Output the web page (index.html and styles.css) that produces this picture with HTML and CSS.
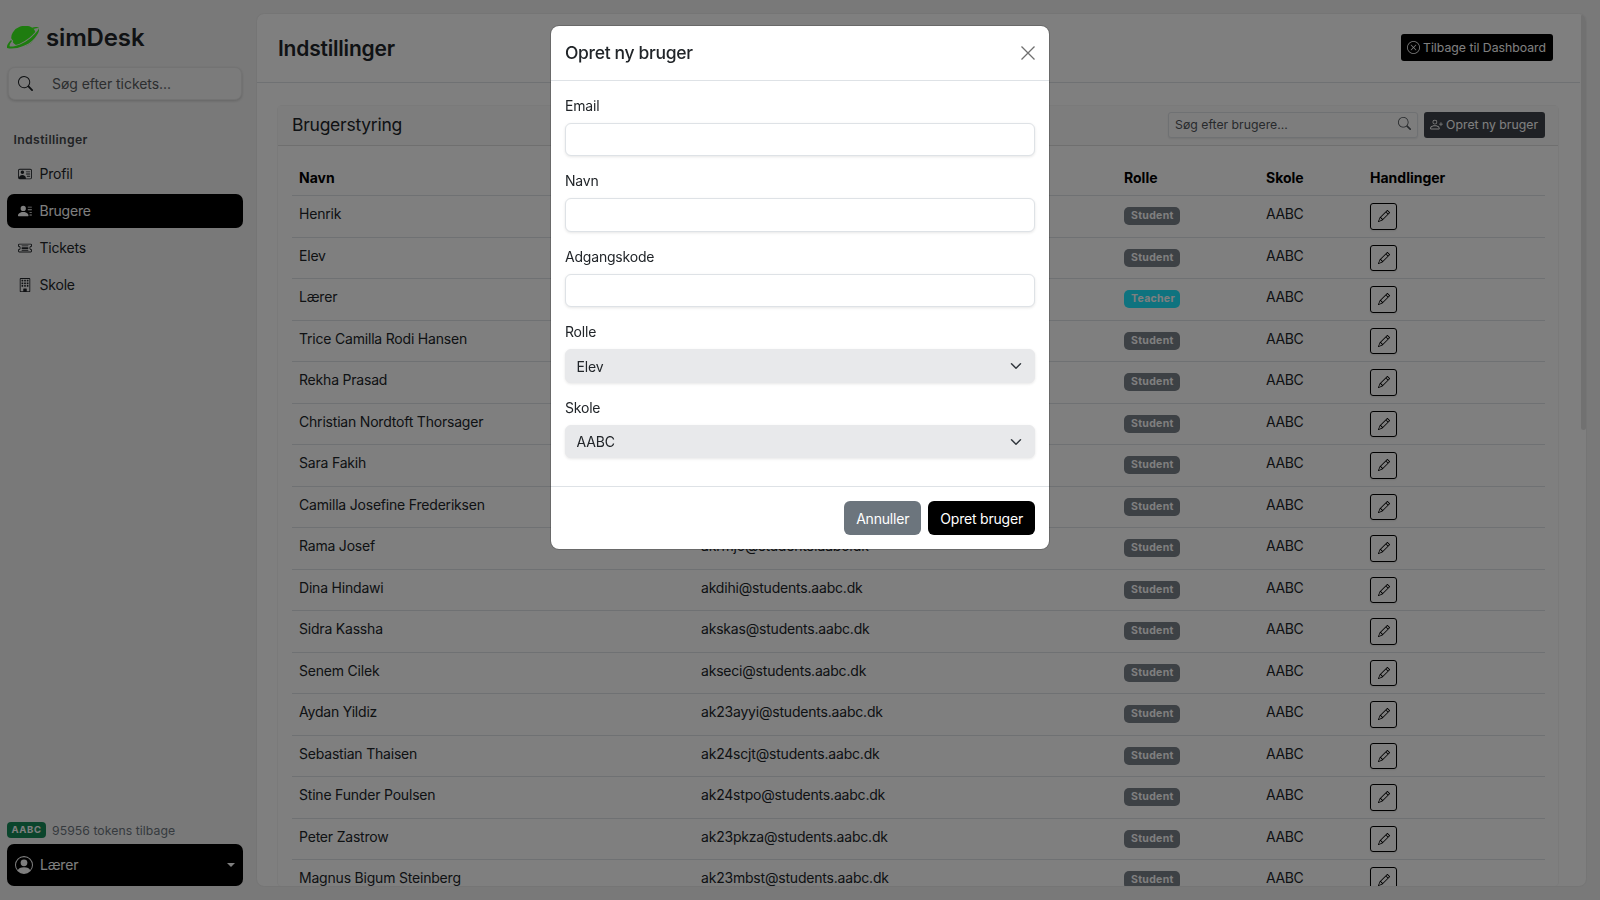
FILE: index.html
```html
<!DOCTYPE html>
<html lang="da">
<head>
<meta charset="utf-8">
<title>simDesk – Indstillinger</title>
<link rel="stylesheet" href="styles.css">
</head>
<body>
<div class="app">
  <aside class="sidebar">
    <div class="brand">
      <svg class="logo" viewBox="0 0 32 23" aria-hidden="true">
        <ellipse class="logo-fill" cx="16.500" cy="10" rx="12.500" ry="10" transform="rotate(-20 16.500 10)"/>
        <path class="logo-gap" d="M0 22C8 24 20 20 26 14 30 10 33 5 32 2 31 5 27 9 23 12.500 16 18 8 21 3 20.500 2 20.500 2.500 18 5 15L4 14C1 17-1 21 0 22Z"/>
        <path class="logo-fill" d="M0 22C8 24 20 20 26 14 30 10 33 5 32 2 31 5 27 9 23 12.500 16 18 8 21 3 20.500 2 20.500 2.500 18 5 15L4 14C1 17-1 21 0 22Z"/>
        <path class="logo-fill" d="M25 1.700C27.500.9 30.500.8 32 2 30.500 2 28.500 2.300 26.600 3.100Z"/>
      </svg>
      <span class="brand-name">simDesk</span>
    </div>
    <div class="side-search">
      <svg class="bi side-search-icon" viewBox="0 0 16 16"><path d="M11.742 10.344a6.500 6.500 0 1 0-1.397 1.398h-.001c.03.04.062.078.098.115l3.850 3.850a1 1 0 0 0 1.415-1.414l-3.850-3.850a1.007 1.007 0 0 0-.115-.1zM12 6.500a5.500 5.500 0 1 1-11 0 5.500 5.500 0 0 1 11 0z"/></svg>
      <input class="side-search-input" type="text" placeholder="Søg efter tickets...">
    </div>
    <div class="side-heading">Indstillinger</div>
    <nav class="side-nav">
      <a class="side-link">
        <svg class="bi" viewBox="0 0 16 16"><path d="M5 8a2 2 0 1 0 0-4 2 2 0 0 0 0 4Zm4-2.500a.5.5 0 0 1 .5-.5h4a.5.5 0 0 1 0 1h-4a.5.5 0 0 1-.5-.5ZM9 8a.5.5 0 0 1 .5-.5h4a.5.5 0 0 1 0 1h-4A.5.5 0 0 1 9 8Zm1 2.500a.5.5 0 0 1 .5-.5h3a.5.5 0 0 1 0 1h-3a.5.5 0 0 1-.5-.5Z"/><path d="M2 2a2 2 0 0 0-2 2v8a2 2 0 0 0 2 2h12a2 2 0 0 0 2-2V4a2 2 0 0 0-2-2H2ZM1 4a1 1 0 0 1 1-1h12a1 1 0 0 1 1 1v8a1 1 0 0 1-1 1H8.960c.026-.163.04-.33.04-.5C9 10.567 7.210 9 5 9c-2.086 0-3.800 1.398-3.984 3.181A1.006 1.006 0 0 1 1 12V4Z"/></svg>
        Profil
      </a>
      <a class="side-link side-link-active">
        <svg class="bi" viewBox="0 0 16 16"><path d="M6 8a3 3 0 1 0 0-6 3 3 0 0 0 0 6zm-5 6s-1 0-1-1 1-4 6-4 6 3 6 4-1 1-1 1H1zM11 3.500a.5.5 0 0 1 .5-.5h4a.5.5 0 0 1 0 1h-4a.5.5 0 0 1-.5-.5zm.5 2.500a.5.5 0 0 0 0 1h4a.5.5 0 0 0 0-1h-4zm2 3a.5.5 0 0 0 0 1h2a.5.5 0 0 0 0-1h-2zm0 3a.5.5 0 0 0 0 1h2a.5.5 0 0 0 0-1h-2z"/></svg>
        Brugere
      </a>
      <a class="side-link">
        <svg class="bi" viewBox="0 0 16 16"><path d="M4 5.500a.5.5 0 0 1 .5-.5h7a.5.5 0 0 1 0 1h-7a.5.5 0 0 1-.5-.5Zm0 5a.5.5 0 0 1 .5-.5h7a.5.5 0 0 1 0 1h-7a.5.5 0 0 1-.5-.5ZM5 7a1 1 0 0 0 0 2h6a1 1 0 1 0 0-2H5Z"/><path d="M0 4.500A1.500 1.500 0 0 1 1.500 3h13A1.500 1.500 0 0 1 16 4.500V6a.5.5 0 0 1-.5.5 1.500 1.500 0 0 0 0 3 .5.5 0 0 1 .5.5v1.500a1.500 1.500 0 0 1-1.500 1.500h-13A1.500 1.500 0 0 1 0 11.500V10a.5.5 0 0 1 .5-.5 1.500 1.500 0 1 0 0-3A.5.5 0 0 1 0 6V4.500ZM1.500 4a.5.5 0 0 0-.5.5v1.050a2.500 2.500 0 0 1 0 4.900v1.050a.5.5 0 0 0 .5.5h13a.5.5 0 0 0 .5-.5v-1.050a2.500 2.500 0 0 1 0-4.900V4.500a.5.5 0 0 0-.5-.5h-13Z"/></svg>
        Tickets
      </a>
      <a class="side-link">
        <svg class="bi" viewBox="0 0 16 16"><path d="M4 2.500a.5.5 0 0 1 .5-.5h1a.5.5 0 0 1 .5.5v1a.5.5 0 0 1-.5.5h-1a.5.5 0 0 1-.5-.5v-1Zm3 0a.5.5 0 0 1 .5-.5h1a.5.5 0 0 1 .5.5v1a.5.5 0 0 1-.5.5h-1a.5.5 0 0 1-.5-.5v-1Zm3.500-.5a.5.5 0 0 0-.5.5v1a.5.5 0 0 0 .5.5h1a.5.5 0 0 0 .5-.5v-1a.5.5 0 0 0-.5-.5h-1ZM4 5.500a.5.5 0 0 1 .5-.5h1a.5.5 0 0 1 .5.5v1a.5.5 0 0 1-.5.5h-1a.5.5 0 0 1-.5-.5v-1ZM7.500 5a.5.5 0 0 0-.5.5v1a.5.5 0 0 0 .5.5h1a.5.5 0 0 0 .5-.5v-1a.5.5 0 0 0-.5-.5h-1Zm2.500.5a.5.5 0 0 1 .5-.5h1a.5.5 0 0 1 .5.5v1a.5.5 0 0 1-.5.5h-1a.5.5 0 0 1-.5-.5v-1ZM4.500 8a.5.5 0 0 0-.5.5v1a.5.5 0 0 0 .5.5h1a.5.5 0 0 0 .5-.5v-1a.5.5 0 0 0-.5-.5h-1Zm2.500.5a.5.5 0 0 1 .5-.5h1a.5.5 0 0 1 .5.5v1a.5.5 0 0 1-.5.5h-1a.5.5 0 0 1-.5-.5v-1Zm3.500-.5a.5.5 0 0 0-.5.5v1a.5.5 0 0 0 .5.5h1a.5.5 0 0 0 .5-.5v-1a.5.5 0 0 0-.5-.5h-1Z"/><path d="M2 1a1 1 0 0 1 1-1h10a1 1 0 0 1 1 1v14a1 1 0 0 1-1 1H3a1 1 0 0 1-1-1V1Zm11 0H3v14h3v-2.500a.5.5 0 0 1 .5-.5h3a.5.5 0 0 1 .5.5V15h3V1Z"/></svg>
        Skole
      </a>
    </nav>
    <div class="side-foot">
      <div class="tokens"><span class="school-badge">AABC</span><span class="tokens-text">95956 tokens tilbage</span></div>
      <button class="user-btn" type="button">
        <svg class="bi user-icon" viewBox="0 0 16 16"><path d="M11 6a3 3 0 1 1-6 0 3 3 0 0 1 6 0z"/><path fill-rule="evenodd" d="M0 8a8 8 0 1 1 16 0A8 8 0 0 1 0 8zm8-7a7 7 0 0 0-5.468 11.370C3.242 11.226 4.805 10 8 10s4.757 1.225 5.468 2.370A7 7 0 0 0 8 1z"/></svg>
        <span class="user-name">Lærer</span>
        <span class="caret"></span>
      </button>
    </div>
  </aside>

  <main class="main">
    <div class="main-inner">
      <header class="main-header">
        <h1 class="page-title">Indstillinger</h1>
        <button class="btn-top" type="button">
          <svg class="bi" viewBox="0 0 16 16"><path d="M8 15A7 7 0 1 1 8 1a7 7 0 0 1 0 14zm0 1A8 8 0 1 0 8 0a8 8 0 0 0 0 16z"/><path d="M4.646 4.646a.5.5 0 0 1 .708 0L8 7.293l2.646-2.647a.5.5 0 0 1 .708.708L8.707 8l2.647 2.646a.5.5 0 0 1-.708.708L8 8.707l-2.646 2.647a.5.5 0 0 1-.708-.708L7.293 8 4.646 5.354a.5.5 0 0 1 0-.708z"/></svg>
          Tilbage til Dashboard
        </button>
      </header>
      <div class="content">
        <section class="card">
          <div class="card-header">
            <h2 class="card-title">Brugerstyring</h2>
            <div class="card-tools">
              <div class="user-search">
                <input class="user-search-input" type="text" placeholder="Søg efter brugere...">
                <svg class="bi user-search-icon" viewBox="0 0 16 16"><path d="M11.742 10.344a6.500 6.500 0 1 0-1.397 1.398h-.001c.03.04.062.078.098.115l3.850 3.850a1 1 0 0 0 1.415-1.414l-3.850-3.850a1.007 1.007 0 0 0-.115-.1zM12 6.500a5.500 5.500 0 1 1-11 0 5.500 5.500 0 0 1 11 0z"/></svg>
              </div>
              <button class="btn-new" type="button">
                <svg class="bi" viewBox="0 0 16 16"><path d="M6 8a3 3 0 1 0 0-6 3 3 0 0 0 0 6zm2-3a2 2 0 1 1-4 0 2 2 0 0 1 4 0zm4 8c0 1-1 1-1 1H1s-1 0-1-1 1-4 6-4 6 3 6 4zm-1-.004c-.001-.246-.154-.986-.832-1.664C9.516 10.680 8.289 10 6 10c-2.290 0-3.516.68-4.168 1.332-.678.678-.83 1.418-.832 1.664h10z"/><path d="M13.500 5a.5.5 0 0 1 .5.5V7h1.500a.5.5 0 0 1 0 1H14v1.500a.5.5 0 0 1-1 0V8h-1.500a.5.5 0 0 1 0-1H13V5.500a.5.5 0 0 1 .5-.5z"/></svg>
                Opret ny bruger
              </button>
            </div>
          </div>
          <div class="card-body">
            <table class="users">
              <colgroup><col class="c-name"><col class="c-email"><col class="c-role"><col class="c-school"><col class="c-act"></colgroup>
              <thead><tr><th>Navn</th><th>Email</th><th>Rolle</th><th>Skole</th><th>Handlinger</th></tr></thead>
              <tbody id="rows"></tbody>
            </table>
          </div>
        </section>
      </div>
    </div>
    <div class="thumb"></div>
  </main>
</div>

<div class="backdrop"></div>
<div class="modal">
  <div class="modal-dialog">
    <div class="modal-head">
      <h3 class="modal-title">Opret ny bruger</h3>
      <button class="close" type="button" aria-label="Luk"><svg viewBox="0 0 14 14"><path d="M.5.5l13 13M13.500.5l-13 13"/></svg></button>
    </div>
    <form class="modal-body">
      <div class="field"><label class="label">Email</label><input class="control" type="email"></div>
      <div class="field"><label class="label">Navn</label><input class="control" type="text"></div>
      <div class="field"><label class="label">Adgangskode</label><input class="control" type="password"></div>
      <div class="field"><label class="label">Rolle</label><select class="control select"><option>Elev</option><option>Lærer</option></select></div>
      <div class="field"><label class="label">Skole</label><select class="control select"><option>AABC</option></select></div>
    </form>
    <div class="modal-foot">
      <button class="btn btn-grey" type="button">Annuller</button>
      <button class="btn btn-black" type="button">Opret bruger</button>
    </div>
  </div>
</div>
<script src="app.js"></script>
</body>
</html>
```

FILE: styles.css
```css
* { box-sizing: border-box; }
html, body { margin: 0; height: 100%; }
body {
  font-family: Inter, "Liberation Sans", sans-serif;
  font-size: 14px;
  line-height: 21px;
  letter-spacing: -.2px;
  color: #212529;
  background: #f3f3f3;
  overflow: hidden;
}
button, input, select { font-family: inherit; }
h1, h2, h3 { margin: 0; }
.bi { width: 14px; height: 14px; fill: currentColor; flex: none; }

.app { display: flex; height: 900px; }

/* sidebar */
.sidebar { width: 257px; flex: none; padding: 0 14px 14px 7px; display: flex; flex-direction: column; }
.brand { display: flex; align-items: center; gap: 7px; height: 34px; margin-top: 21px; }
.logo { width: 32px; height: 23px; margin-top: -2px; flex: none; }
.logo-fill { fill: #3cf81e; }
.logo-gap { fill: #f3f3f3; stroke: #f3f3f3; stroke-width: 2; }
.brand-name { font-size: 24px; font-weight: 600; line-height: 34px; color: #212529; letter-spacing: -.15px; }
.side-search { position: relative; margin: 12px 1px 0; }
.side-search-icon { position: absolute; left: 10px; top: 9px; width: 15px; height: 15px; color: #212529; }
.side-search-input {
  display: block; width: 100%; height: 33px; padding: 0 12px 0 43px;
  font-size: 14px; letter-spacing: -.05px; color: #212529; background: #f7f7f7;
  border: 1px solid #e6e6e6; border-radius: 7px; box-shadow: 0 1px 3px rgba(0,0,0,.18); outline: none;
}
.side-search-input::placeholder { color: #595c5f; opacity: 1; }
.side-heading { margin-top: 31px; padding-left: 6.500px; font-size: 12.25px; font-weight: 600; line-height: 18px; color: #43474b; letter-spacing: .35px; }
.side-nav { display: flex; flex-direction: column; gap: 3px; margin-top: 8px; }
.side-link { display: flex; align-items: center; gap: 7.500px; height: 34px; padding: 0 11px 1px; border-radius: 7px; color: #212529; }
.side-link-active { background: #000; color: #fff; }
.side-foot { margin-top: auto; }
.tokens { display: flex; align-items: center; gap: 6px; height: 16px; margin-bottom: 6px; }
.school-badge { width: 39px; height: 16px; border-radius: 4px; background: #178a58; color: #fff; font-size: 9.500px; font-weight: 700; line-height: 16px; text-align: center; letter-spacing: .6px; }
.tokens-text { font-size: 12.25px; color: #6c757d; letter-spacing: .05px; }
.user-btn { display: flex; align-items: center; width: 100%; height: 42px; padding: 0 8px 2px; border: 0; border-radius: 7px; background: #000; color: #fff; font-size: 14px; letter-spacing: -.2px; }
.user-icon { width: 18px; height: 18px; margin-right: 7px; margin-top: 2px; }
.user-name { flex: 1; text-align: left; }
.caret { width: 0; height: 0; margin-top: 2px; border-left: 4px solid transparent; border-right: 4px solid transparent; border-top: 4px solid #fff; }

/* main */
.main { position: relative; flex: 1; margin: 14px 14px 14px 0; background: #fff; border-radius: 7px; overflow: hidden; box-shadow: 0 0 2px rgba(0,0,0,.12); }
.main-inner { width: 1323px; height: 100%; overflow: hidden; }
.main-header { display: flex; justify-content: space-between; align-items: center; height: 69px; padding: 0 27px 0 21px; border-bottom: 1px solid #dee2e6; }
.page-title { font-size: 21px; font-weight: 600; line-height: 28px; color: #212529; margin-top: 2px; letter-spacing: -.2px; }
.btn-top, .btn-new { display: flex; align-items: center; gap: 3px; border: 0; color: #fff; font-size: 12.25px; }
.btn-top .bi, .btn-new .bi { width: 13px; height: 13px; }
.btn-top { height: 27px; padding: 0 7px 0 6px; margin-top: -2px; background: #000; border-radius: 3px; }
.content { padding: 22px 21px 0 20px; }
.card { background: #fff; border-radius: 5px; border: 1px solid rgba(0,0,0,.04); }
.card-header { display: flex; justify-content: space-between; align-items: center; height: 40px; padding: 0 13px 2px 14px; background: #fbfbfb; border-bottom: 1px solid #dfdfdf; }
.card-title { font-size: 17.500px; font-weight: 400; line-height: 26px; color: #212529; letter-spacing: -.25px; }
.card-tools { display: flex; gap: 6px; align-items: center; }
.user-search { position: relative; }
.user-search-input { display: block; width: 250px; height: 26px; padding: 0 30px 0 6px; font-size: 12.25px; background: #fbfbfb; border: 1px solid #dee2e6; border-radius: 3px; box-shadow: 0 1px 2px rgba(0,0,0,.08); outline: none; }
.user-search-input::placeholder { color: #50555a; opacity: 1; }
.user-search-icon { position: absolute; right: 7px; top: 5px; width: 13px; height: 13px; color: #50555a; }
.btn-new { height: 26px; padding: 0 7px 0 6px; background: #3e434a; border-radius: 3px; }
.card-body { padding: 14px; height: 740px; }

/* table */
.users { width: 1253px; table-layout: fixed; border-collapse: collapse; }
.c-name { width: 402px; }
.c-email { width: 423px; }
.c-role { width: 142px; }
.c-school { width: 104px; }
.c-act { width: 182px; }
.users th, .users td { padding: 7px; text-align: left; vertical-align: top; border-bottom: 1px solid #dee2e6; }
.users th { font-weight: 700; height: 35px; color: #000; letter-spacing: 0; }
.users td { height: 41.470px; padding-top: 7.300px; }
.users td:nth-child(4) { letter-spacing: -.4px; }
.role { display: inline-block; padding: 0 7px; width: 56px; height: 18px; border-radius: 5px; font-size: 10.500px; font-weight: 700; line-height: 18px; text-align: center; letter-spacing: .3px; color: #fff; background: #7b828a; margin-top: 3px; }
.role-teacher { background: #1fe6ff; }
.act { display: flex; align-items: center; justify-content: center; width: 27px; height: 26.500px; padding: 0; margin-top: -.3px; background: transparent; border: 1px solid #000; border-radius: 3px; box-shadow: 0 1px 2px rgba(0,0,0,.1); color: #000; }
.act .bi { width: 12px; height: 12px; }

.thumb { position: absolute; top: 0; right: 0; width: 5px; height: 416px; border-radius: 3px; background: #e3e3e3; }

/* modal */
.backdrop { position: fixed; inset: 0; background: rgba(0,0,0,.5); }
.modal { position: fixed; inset: 0; }
.modal-dialog { width: 500px; margin: 24.500px auto 0; background: #fff; border: 1px solid rgba(0,0,0,.175); border-radius: 9px; background-clip: padding-box; }
.modal-head { display: flex; justify-content: space-between; align-items: center; height: 55.250px; padding: 0 14px; border-bottom: 1px solid #dee2e6; }
.modal-title { font-size: 17.500px; font-weight: 500; line-height: 26.250px; color: #212529; letter-spacing: -.33px; }
.close { display: flex; width: 14px; height: 14px; padding: 0; border: 0; background: none; }
.close svg { width: 14px; height: 14px; stroke: #6f6f6f; stroke-width: 1.300; fill: none; }
.modal-body { padding: 14px 14px 14px; }
.field { margin-bottom: 14px; }
.label { display: block; margin-bottom: 7px; color: #212529; }
.control { display: block; width: 100%; height: 33.500px; padding: 0 10.500px; font-size: 14px; letter-spacing: -.15px; color: #212529; background: #fff; border: 1px solid #dee2e6; border-radius: 6px; box-shadow: 0 1px 3px rgba(0,0,0,.1); outline: none; }
.select {
  appearance: none; -webkit-appearance: none; background-color: #e8e9eb; border-color: #e8e9eb;
  background-image: url("data:image/svg+xml,%3csvg xmlns='http://www.w3.org/2000/svg' viewBox='0 0 16 16'%3e%3cpath fill='none' stroke='%23343a40' stroke-linecap='round' stroke-linejoin='round' stroke-width='2' d='m2 5 6 6 6-6'/%3e%3c/svg%3e");
  background-repeat: no-repeat; background-position: right 10.500px center; background-size: 16px 12px;
}
.modal-foot { display: flex; justify-content: flex-end; gap: 7px; padding: 14px; border-top: 1px solid #dee2e6; }
.btn { height: 33.500px; padding: 0 12px; border: 0; border-radius: 6px; font-size: 14px; letter-spacing: -.2px; color: #fff; }
.btn-grey { background: #6c757d; }
.btn-black { background: #000; }
```

FILE: app.js
```js
var users = [
  ["Henrik", "henrik@aabc.dk", "Student"],
  ["Elev", "elev@students.aabc.dk", "Student"],
  ["Lærer", "laerer@aabc.dk", "Teacher"],
  ["Trice Camilla Rodi Hansen", "aktrha@students.aabc.dk", "Student"],
  ["Rekha Prasad", "akrepr@students.aabc.dk", "Student"],
  ["Christian Nordtoft Thorsager", "akchth@students.aabc.dk", "Student"],
  ["Sara Fakih", "aksafa@students.aabc.dk", "Student"],
  ["Camilla Josefine Frederiksen", "akcafr@students.aabc.dk", "Student"],
  ["Rama Josef", "akrmjo@students.aabc.dk", "Student"],
  ["Dina Hindawi", "akdihi@students.aabc.dk", "Student"],
  ["Sidra Kassha", "akskas@students.aabc.dk", "Student"],
  ["Senem Cilek", "akseci@students.aabc.dk", "Student"],
  ["Aydan Yildiz", "ak23ayyi@students.aabc.dk", "Student"],
  ["Sebastian Thaisen", "ak24scjt@students.aabc.dk", "Student"],
  ["Stine Funder Poulsen", "ak24stpo@students.aabc.dk", "Student"],
  ["Peter Zastrow", "ak23pkza@students.aabc.dk", "Student"],
  ["Magnus Bigum Steinberg", "ak23mbst@students.aabc.dk", "Student"]
];
var pencil = '<svg class="bi" viewBox="0 0 16 16"><path d="M12.146.146a.5.5 0 0 1 .708 0l3 3a.5.5 0 0 1 0 .708l-10 10a.5.5 0 0 1-.168.11l-5 2a.5.5 0 0 1-.65-.65l2-5a.5.5 0 0 1 .11-.168l10-10zM11.207 2.500 13.500 4.793 14.793 3.500 12.500 1.207 11.207 2.500zm1.586 3L10.500 3.207 4 9.707V10h.5a.5.5 0 0 1 .5.5v.5h.5a.5.5 0 0 1 .5.5v.5h.293l6.500-6.500zm-9.761 5.175-.106.106-1.528 3.821 3.821-1.528.106-.106A.5.5 0 0 1 5 12.500V12h-.5a.5.5 0 0 1-.5-.5V11h-.5a.5.5 0 0 1-.468-.325z"/></svg>';
document.getElementById("rows").innerHTML = users.map(function (u) {
  var cls = u[2] === "Teacher" ? "role role-teacher" : "role";
  return "<tr><td>" + u[0] + "</td><td>" + u[1] + '</td><td><span class="' + cls + '">' + u[2] +
    '</span></td><td>AABC</td><td><button class="act" type="button" aria-label="Rediger">' + pencil + "</button></td></tr>";
}).join("");
```
